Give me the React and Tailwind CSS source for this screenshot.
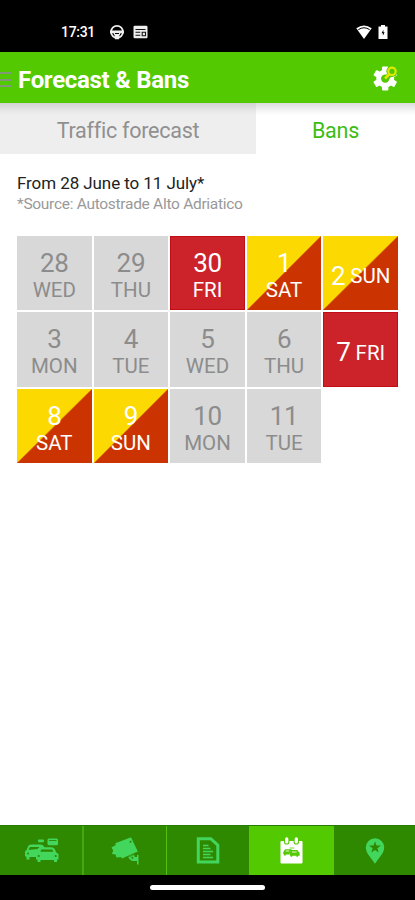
import clsx from "clsx";

const DAYS = [
  { day: 28, name: "WED" },
  { day: 29, name: "THU" },
  { day: 30, name: "FRI", ban: "full" },
  { day: 1, name: "SAT", ban: "partial" },
  { day: 2, name: "SUN", ban: "partial", inline: true },
  { day: 3, name: "MON" },
  { day: 4, name: "TUE" },
  { day: 5, name: "WED" },
  { day: 6, name: "THU" },
  { day: 7, name: "FRI", ban: "full", inline: true },
  { day: 8, name: "SAT", ban: "partial" },
  { day: 9, name: "SUN", ban: "partial" },
  { day: 10, name: "MON" },
  { day: 11, name: "TUE" },
];

const NAV_ITEMS = [
  { id: "traffic", Icon: CarsIcon },
  { id: "webcams", Icon: CameraIcon },
  { id: "news", Icon: NewsIcon },
  { id: "forecast", Icon: CalendarIcon, active: true },
  { id: "places", Icon: PinIcon },
];

/* ── Status bar ── */
function StatusBar() {
  return (
    <div className="flex h-[52px] items-center bg-black pt-3 pr-[27px] pl-[61px] text-white">
      <span className="w-[48px] text-[14px] leading-none font-medium tracking-[-0.3px]">17:31</span>
      <svg className="h-4 w-4" viewBox="0 0 16 16">
        <circle cx="8" cy="7.800" r="6" fill="none" stroke="#eee" strokeWidth="1.800" />
        <path d="M1 6.500h14v2.700h-3.500L10 12.500v2.800H6v-2.800L4.500 9.200H1z" fill="#eee" />
        <path d="M4.500 4.800h7M6 9.500h4" stroke="#000" strokeWidth="1" />
      </svg>
      <svg className="ml-[8px] h-[14px] w-[15px]" viewBox="0 0 15 14">
        <rect x="0.500" y="0.800" width="14" height="12.500" rx="1.200" fill="#eee" />
        <path d="M2.500 4.500h10M2.500 7.200h4.800M2.500 10.200h4.800M9.200 7.200h3.300v3.500H9.200z" fill="none" stroke="#111" strokeWidth="1.100" />
      </svg>
      <svg className="ml-auto h-[14px] w-4" viewBox="0 0 16 14">
        <path d="M8 14 .3 3.200Q8-2.400 15.700 3.200z" fill="#fff" />
        <path d="M2.300 4.700Q8 .8 13.700 4.700" fill="none" stroke="#000" strokeWidth="1" />
      </svg>
      <svg className="ml-[6px] h-[14px] w-[10px]" viewBox="0 0 10 14">
        <path d="M3 0h4v1.500h2.500V14H.5V1.500H3z" fill="#fff" />
        <path d="M5.400 4.800 3.600 8.200h1.300V10.800L6.600 7.300H5.400z" fill="#000" />
      </svg>
    </div>
  );
}

/* ── Icons ── */
function SettingsIcon() {
  return (
    <svg className="h-7 w-7" viewBox="0 0 28 28">
      <g transform="translate(13.200 14.600)">
        <g fill="#fff">
          <circle r="9" />
          <rect x="-3.200" y="-12" width="6.400" height="24" rx="1" />
          <rect x="-3.200" y="-12" width="6.400" height="24" rx="1" transform="rotate(60)" />
          <rect x="-3.200" y="-12" width="6.400" height="24" rx="1" transform="rotate(120)" />
        </g>
        <circle r="4.200" fill="#52c900" />
      </g>
      <path d="m15 13.500 4.200-4.200" stroke="#52c900" strokeWidth="5" />
      <circle cx="20" cy="7.300" r="5.600" fill="#52c900" />
      <circle cx="20" cy="7.300" r="3.700" fill="none" stroke="#dfea00" strokeWidth="2.200" />
      <path d="m17.500 10-4.500 4.500" stroke="#dfea00" strokeWidth="2.600" />
    </svg>
  );
}

function CarsIcon() {
  return (
    <svg className="ml-[2px] h-[26px] w-[36px]" viewBox="0 0 36 26">
      <g fill="#43d65c">
        <path d="M4.500 7.500Q5.500 6.500 8 6.500h8q3 0 4 2l1 3h-5l-3 4.500V19H5.500v2.500h-3V19L1 18v-4.500L2.500 12z" />
        <path d="M15 11q1-1.700 3-1.700h9.500q2.300 0 3.200 1.700l1.600 3.500 2.200 1.500v5.500H33V24h-3v-2H16.500v2h-3v-2.500H12V16l1.500-1.500z" />
        <rect x="23.500" y="0.500" width="10.500" height="6.800" rx="1.500" />
        <rect x="14" y="1.500" width="6" height="2.800" rx="1" />
      </g>
      <g fill="#2f8900">
        <path d="m4.500 12 1.600-3H15.500L13.500 11zM16.300 13.800l1-2.200h11l1 2.200z" />
        <circle cx="4" cy="15.500" r="1" />
        <circle cx="14.700" cy="18" r="1.100" />
        <circle cx="31.700" cy="18" r="1.100" />
        <path d="M25 2h7.500v.9H25z" />
      </g>
    </svg>
  );
}

function CameraIcon() {
  return (
    <svg className="h-[28px] w-[28px]" viewBox="0 0 28 28">
      <g fill="#43d65c">
        <path d="M4.300 6.200 18.800.7q1.200-.4 1.800.7L26.800 14.500 11 21.500 7 16z" />
        <path d="m0.500 10.500 2.500-1.500 2-1 5.500 12-5 .5-1-3L1 17l1.200-3.500z" />
        <path d="M17 20q3.500-3 6-2.500l.8 2.500H26v-2h1.500v9.500H26V24h-4q-2.500 0-5-4z" />
      </g>
      <path d="m13.500 21.800 11-4.800" stroke="#2f8900" strokeWidth="0.700" />
      <circle cx="19.500" cy="4.800" r="1" fill="#2f8900" />
      <circle cx="21.300" cy="20.800" r="1" fill="#2f8900" />
    </svg>
  );
}

function NewsIcon() {
  return (
    <svg className="h-[27px] w-[24px]" viewBox="0 0 24 27" fill="none" stroke="#43d65c">
      <path d="M2.300 1.700h12.500l7 6.500V25H2.300z" strokeWidth="3" />
      <path d="M7 8.500h5.500M7 11.500h7.500M7 14.500h10M7 17.500h7.500M7 20.500h10" strokeWidth="1.400" />
    </svg>
  );
}

function CalendarIcon() {
  return (
    <svg className="h-[27px] w-[23px]" viewBox="0 0 24 28">
      <rect x="0.500" y="4" width="23" height="23.500" rx="1" fill="#fff" />
      <path d="M4.200 0h5.600v5a2.800 2.800 0 0 1-5.600 0zM14.200 0h5.600v5a2.800 2.800 0 0 1-5.600 0z" fill="#52c900" />
      <path d="M7 1.800V5M17 1.800V5" stroke="#fff" strokeWidth="3.400" strokeLinecap="round" />
      <g fill="#52c900">
        <path d="M4 14.800 5.200 12.600h6.500l1.200 1.400-2.500 1.400-.5 2.800H6v1H4v-1.600h-.6v-2.100zM11 15l1.200-1.400h6L19.600 15.500l.9.800V19.500h-1.700v1h-1.700v-1h-4.300v1h-1.700v-1h-.8v-3.200z" />
        <path d="M10 11h5v.8h-5z" />
      </g>
      <path d="M6 14.500h3.500M12.500 15.600h5" stroke="#fff" strokeWidth="0.900" />
    </svg>
  );
}

function PinIcon() {
  return (
    <svg className="h-[26px] w-[20px]" viewBox="0 0 20 26">
      <path d="M10 .3a9.200 9.200 0 0 1 9.200 9.200c0 5.500-5 10-9.200 16.200C5.800 19.500.8 15 .8 9.500A9.200 9.200 0 0 1 10 .3z" fill="#43d65c" />
      <path d="m10 3.300 1.500 4.200 4.500.1-3.600 2.700 1.300 4.300L10 12.100l-3.700 2.500 1.300-4.300L4 7.600l4.500-.1z" fill="#2f8900" />
    </svg>
  );
}

/* ── Header and tabs ── */
function Header() {
  return (
    <header className="flex h-[51px] items-center bg-[#52c900] pr-[15px]">
      <div className="flex w-[11px] flex-col gap-[4.500px] pt-1">
        <span className="h-[2px] bg-[#80977a]" />
        <span className="h-[2px] bg-[#80977a]" />
        <span className="h-[2px] bg-[#80977a]" />
      </div>
      <h1 className="flex-1 pt-[4px] pl-[7px] text-[24px] leading-none font-bold tracking-[-0.300px] text-white">
        Forecast &amp; Bans
      </h1>
      <SettingsIcon />
    </header>
  );
}

function Tabs() {
  return (
    <div className="flex h-[51px] text-[21.500px] tracking-[-0.250px]">
      <button className="w-[256px] bg-linear-to-b from-[#d2d2d2] via-[#e8e8e8] via-16% to-[#eeeeee] to-24% pt-[5px] text-[#909090]">
        Traffic forecast
      </button>
      <button className="flex-1 bg-linear-to-b from-[#dcdcdc] via-[#f5f5f5] via-16% to-white to-24% pt-[5px] text-[#3cbd13]">
        Bans
      </button>
    </div>
  );
}

function DayCell({ day, name, ban, inline }) {
  return (
    <div
      className={clsx(
        "flex h-[74.500px] items-center justify-center",
        inline ? "gap-[5px] pt-[7px]" : "flex-col pt-[7px]",
        !ban && "bg-[#d8d8d8] text-[#8c8c8c]",
        ban && "text-white",
        ban === "full" && "border border-[#c20d17] bg-[#cc2229]",
        ban === "partial" && "bg-[linear-gradient(to_bottom_right,#fcd900_49.3%,#cb3300_50.7%)]"
      )}
    >
      <span className="text-[26px] leading-[27px] tracking-[-0.300px]">{day}</span>
      <span className="text-[20.500px] leading-[26px]">{name}</span>
    </div>
  );
}

function BottomNav() {
  return (
    <nav className="grid h-[50px] grid-cols-[84px_83px_82px_85px_81px] border-t border-[#267a08]">
      {NAV_ITEMS.map(({ id, Icon, active }, i) => (
        <button
          key={id}
          className={clsx(
            "flex items-center justify-center",
            active ? "bg-[#52c900]" : "bg-[#2f8900]",
            i === 0 && "border-r-2 border-[#45aa09]",
            i === 1 && "border-r border-[#52c010]"
          )}
        >
          <Icon />
        </button>
      ))}
    </nav>
  );
}

export default function App() {
  return (
    <div className="flex h-[900px] w-[415px] flex-col overflow-hidden bg-white font-['Roboto',sans-serif]">
      <StatusBar />
      <Header />
      <Tabs />

      <main className="flex-1 px-[17px] pt-[18px]">
        <p className="text-[17px] leading-[22px] tracking-[-0.080px] text-[#222222]">From 28 June to 11 July*</p>
        <p className="text-[15.500px] leading-[21px] tracking-[-0.290px] text-[#999999]">
          *Source: Autostrade Alto Adriatico
        </p>
        <div className="mt-[20.500px] grid grid-cols-5 gap-[2px]">
          {DAYS.map((d) => (
            <DayCell key={d.day} {...d} />
          ))}
        </div>
      </main>

      <BottomNav />
      {/* Gesture bar */}
      <div className="flex h-[25px] justify-center bg-black pt-[10px]">
        <div className="h-[5px] w-[115px] rounded-full bg-white" />
      </div>
    </div>
  );
}
